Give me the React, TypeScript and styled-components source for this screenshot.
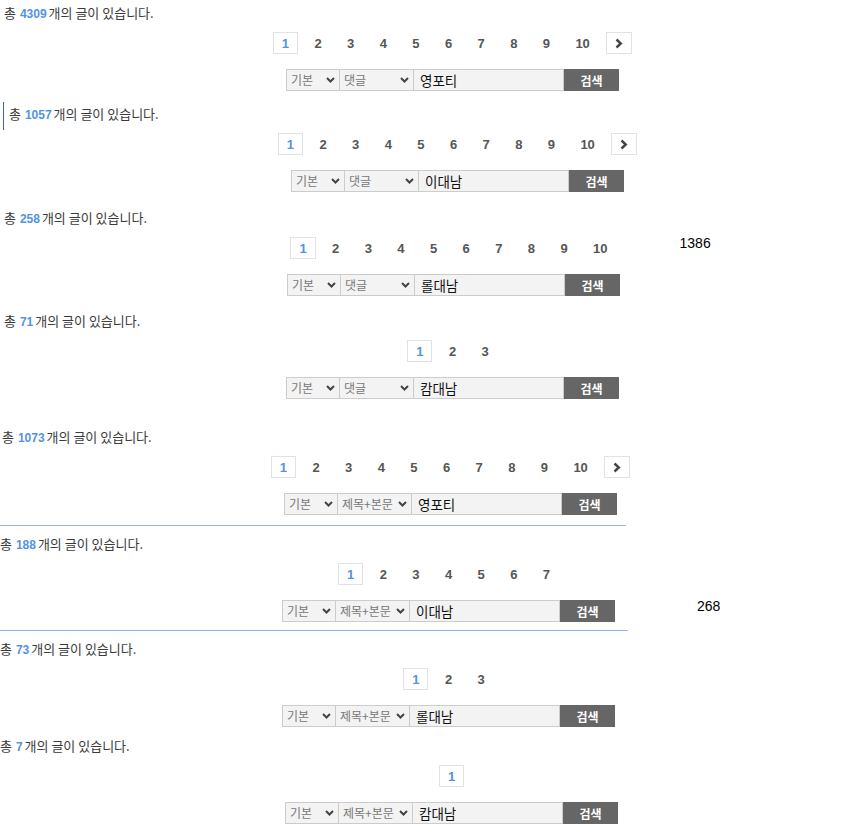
import styled, { createGlobalStyle, css } from 'styled-components';

const GlobalStyle = createGlobalStyle`
  html, body {
    margin: 0;
    padding: 0;
    background: #fff;
    overflow-x: hidden;
  }
  body {
    font-family: "Noto Sans CJK KR", "Noto Sans", sans-serif;
  }
`;

const Page = styled.div`
  width: 851px;
  overflow: hidden;
`;

const Board = styled.section<{ $center: number; $top: number }>`
  width: ${p => p.$center * 2}px;
  margin-top: ${p => p.$top}px;
`;

const Summary = styled.p<{ $indent: number; $marked?: boolean }>`
  margin: 0;
  height: 16px;
  padding-left: ${p => p.$indent}px;
  font-size: 13px;
  line-height: 16px;
  color: #3a3a3a;
  white-space: nowrap;
  ${p =>
    p.$marked &&
    css`
      margin-left: 3px;
      border-left: 1px solid #3d66ad;
      padding: 4px 0 8px 5px;
    `}
`;

const Count = styled.strong`
  font-family: "Liberation Sans", Arial, sans-serif;
  font-weight: 700;
  font-size: 12px;
  line-height: 12px;
  color: #5393e2;
  margin: 0 2px 0 1px;
`;

const Row = styled.div<{ $top: number }>`
  display: grid;
  grid-template-columns: 1fr auto 1fr;
  align-items: start;
  height: 22px;
  margin-top: ${p => p.$top}px;
`;

const Pager = styled.nav`
  grid-column: 2;
  display: flex;
  gap: 7.4px;
`;

const PageItem = styled.a<{ $active?: boolean; $boxed?: boolean }>`
  display: flex;
  align-items: center;
  justify-content: center;
  box-sizing: border-box;
  min-width: 25px;
  height: 22px;
  padding: 0 8px;
  border: 1px solid ${p => (p.$active || p.$boxed ? '#e2e2e2' : 'transparent')};
  font-family: "Liberation Sans", Arial, sans-serif;
  font-weight: 700;
  font-size: 13px;
  color: ${p => (p.$active ? '#5393e2' : '#555')};
  text-decoration: none;
`;

const NextItem = styled(PageItem)`
  min-width: 26px;
  padding: 0;
`;

const SideNote = styled.span<{ $offset: number }>`
  grid-column: 3;
  padding-left: ${p => p.$offset}px;
  margin-top: -1px;
  font-family: "Liberation Sans", Arial, sans-serif;
  font-size: 14px;
  line-height: 14px;
  color: #000;
`;

const SearchForm = styled.form`
  grid-column: 2;
  display: flex;
  height: 22px;
  margin: 0;
`;

const Dropdown = styled.button<{ $w: number; $first?: boolean }>`
  display: flex;
  align-items: center;
  justify-content: space-between;
  width: ${p => p.$w}px;
  height: 22px;
  box-sizing: border-box;
  margin: 0;
  padding: 0 4px 0 4px;
  border: 1px solid #cccccc;
  border-left-width: ${p => (p.$first ? 1 : 0)}px;
  border-radius: 0;
  background: #f3f3f3;
  font-family: "Noto Sans CJK KR", sans-serif;
  font-size: 12px;
  line-height: 20px;
  color: #777;
  cursor: pointer;
`;

const Query = styled.input`
  width: 150px;
  height: 22px;
  box-sizing: border-box;
  margin: 0;
  padding: 0 6px;
  border: 1px solid #cccccc;
  border-left: 0;
  border-radius: 0;
  background: #f3f3f3;
  font-family: "Noto Sans CJK KR", sans-serif;
  font-size: 13.5px;
  color: #111;
  outline: none;
`;

const SearchButton = styled.button`
  width: 55px;
  height: 22px;
  margin: 0;
  padding: 0;
  border: 0;
  border-radius: 0;
  background: #666;
  color: #fff;
  font-family: "Noto Sans CJK KR", sans-serif;
  font-weight: 700;
  font-size: 12px;
`;

const Divider = styled.hr<{ $w: number; $color: string; $top: number }>`
  margin: ${p => p.$top}px 0 0;
  border: 0;
  height: 1px;
  width: ${p => p.$w}px;
  background: ${p => p.$color};
`;

type BoardData = {
  total: number;
  pages: number;
  next?: boolean;
  field: string;
  query: string;
  center: number;
  top: number;
  indent: number;
  marked?: boolean;
  pagerNote?: { text: string; offset: number };
  formNote?: { text: string; offset: number };
  rule?: { width: number; color: string; top: number };
};

const boards: BoardData[] = [
  { total: 4309, pages: 10, next: true, field: '댓글', query: '영포티', center: 452.5, top: 5, indent: 4 },
  { total: 1057, pages: 10, next: true, field: '댓글', query: '이대남', center: 457.5, top: 11, indent: 0, marked: true },
  { total: 258, pages: 10, field: '댓글', query: '롤대남', center: 453.5, top: 18, indent: 4, pagerNote: { text: '1386', offset: 63 } },
  { total: 71, pages: 3, field: '댓글', query: '캄대남', center: 452.5, top: 17, indent: 4 },
  { total: 1073, pages: 10, next: true, field: '제목+본문', query: '영포티', center: 450.5, top: 30, indent: 2, rule: { width: 626, color: '#9db4d6', top: 10 } },
  { total: 188, pages: 7, field: '제목+본문', query: '이대남', center: 448.5, top: 10, indent: 0, formNote: { text: '268', offset: 82 }, rule: { width: 628, color: '#89b6ea', top: 8 } },
  { total: 73, pages: 3, field: '제목+본문', query: '롤대남', center: 448.5, top: 10, indent: 0 },
  { total: 7, pages: 1, field: '제목+본문', query: '캄대남', center: 451.5, top: 11, indent: 0 },
];

function Arrow() {
  return (
    <svg width="9" height="6" viewBox="0 0 9 6">
      <polyline points="1,1 4.5,4.5 8,1" fill="none" stroke="#444" strokeWidth="2" />
    </svg>
  );
}

function BoardBlock({ b }: { b: BoardData }) {
  return (
    <>
      <Board $center={b.center} $top={b.top}>
        <Summary $indent={b.indent} $marked={b.marked}>
          총 <Count>{b.total}</Count>개의 글이 있습니다.
        </Summary>
        <Row $top={b.marked ? 3 : 11}>
          <Pager>
            {Array.from({ length: b.pages }, (_, i) => (
              <PageItem key={i} $active={i === 0}>
                {i + 1}
              </PageItem>
            ))}
            {b.next && (
              <NextItem $boxed>
                <svg width="8" height="11" viewBox="0 0 8 11">
                  <polyline points="1.5,1.5 5.8,5.5 1.5,9.5" fill="none" stroke="#444" strokeWidth="2.4" />
                </svg>
              </NextItem>
            )}
          </Pager>
          {b.pagerNote && <SideNote $offset={b.pagerNote.offset}>{b.pagerNote.text}</SideNote>}
        </Row>
        <Row $top={15}>
          <SearchForm onSubmit={e => e.preventDefault()}>
            <Dropdown type="button" $w={54} $first>
              <span>기본</span>
              <Arrow />
            </Dropdown>
            <Dropdown type="button" $w={74}>
              <span>{b.field}</span>
              <Arrow />
            </Dropdown>
            <Query defaultValue={b.query} />
            <SearchButton type="submit">검색</SearchButton>
          </SearchForm>
          {b.formNote && <SideNote $offset={b.formNote.offset}>{b.formNote.text}</SideNote>}
        </Row>
      </Board>
      {b.rule && <Divider $w={b.rule.width} $color={b.rule.color} $top={b.rule.top} />}
    </>
  );
}

export default function App() {
  return (
    <Page>
      <GlobalStyle />
      {boards.map((b, i) => (
        <BoardBlock key={i} b={b} />
      ))}
    </Page>
  );
}
